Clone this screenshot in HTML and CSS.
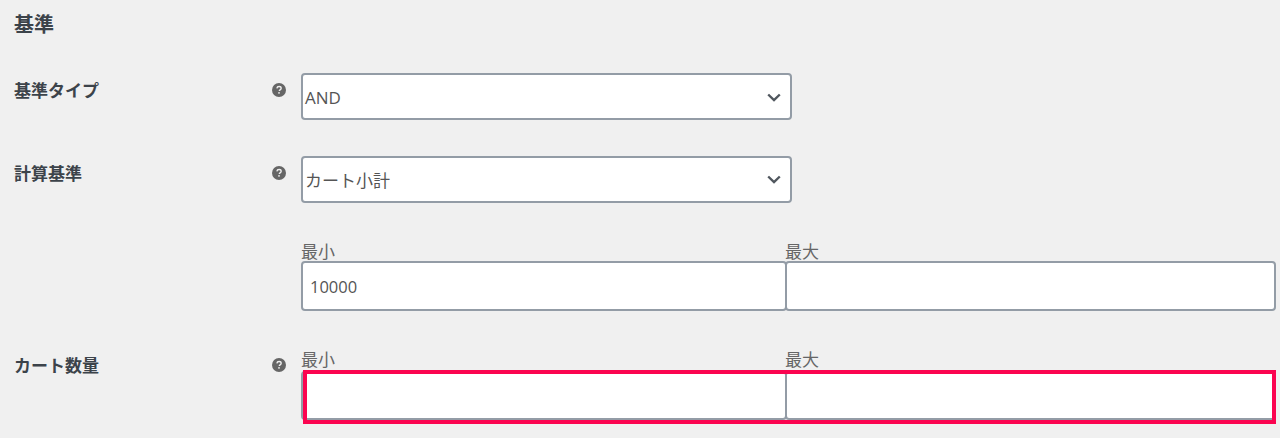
FILE: index.html
```html
<!DOCTYPE html>
<html lang="ja">
<head>
  <meta charset="UTF-8">
  <title>基準</title>
  <link rel="stylesheet" href="styles.css">
</head>
<body>

<h2 class="section-title">基準</h2>

<div class="form-row row-type">
  <div class="row-label">基準タイプ</div>
  <div class="row-help">
    <svg class="help-icon" viewBox="0 0 20 20"><circle cx="10" cy="10" r="10" fill="#666"/><path d="M7 7.6c.2-1.7 1.4-2.6 3.1-2.6 1.8 0 3 1 3 2.5 0 1.2-.7 1.8-1.5 2.3-.8.5-1.1.8-1.1 1.6" fill="none" stroke="#f0f0f0" stroke-width="2"/><rect x="8.9" y="13" width="2.2" height="2.2" fill="#f0f0f0"/></svg>
  </div>
  <div class="row-field">
    <div class="select-box">
      <span>AND</span>
      <svg class="chevron" viewBox="0 0 14 9"><path d="M1.2 1.5 7 7l5.8-5.5" fill="none" stroke="#50575e" stroke-width="2.4"/></svg>
    </div>
  </div>
</div>

<div class="form-row row-basis">
  <div class="row-label">計算基準</div>
  <div class="row-help">
    <svg class="help-icon" viewBox="0 0 20 20"><circle cx="10" cy="10" r="10" fill="#666"/><path d="M7 7.6c.2-1.7 1.4-2.6 3.1-2.6 1.8 0 3 1 3 2.5 0 1.2-.7 1.8-1.5 2.3-.8.5-1.1.8-1.1 1.6" fill="none" stroke="#f0f0f0" stroke-width="2"/><rect x="8.9" y="13" width="2.2" height="2.2" fill="#f0f0f0"/></svg>
  </div>
  <div class="row-field">
    <div class="select-box select-cjk">
      <span>カート小計</span>
      <svg class="chevron" viewBox="0 0 14 9"><path d="M1.2 1.5 7 7l5.8-5.5" fill="none" stroke="#50575e" stroke-width="2.4"/></svg>
    </div>
  </div>
</div>

<div class="form-row row-range">
  <div class="row-label"></div>
  <div class="row-help"></div>
  <div class="row-field range">
    <label class="range-item">
      <span class="range-label">最小</span>
      <div class="text-box">10000</div>
    </label>
    <label class="range-item">
      <span class="range-label">最大</span>
      <div class="text-box"></div>
    </label>
  </div>
</div>

<div class="form-row row-qty">
  <div class="row-label">カート数量</div>
  <div class="row-help">
    <svg class="help-icon" viewBox="0 0 20 20"><circle cx="10" cy="10" r="10" fill="#666"/><path d="M7 7.6c.2-1.7 1.4-2.6 3.1-2.6 1.8 0 3 1 3 2.5 0 1.2-.7 1.8-1.5 2.3-.8.5-1.1.8-1.1 1.6" fill="none" stroke="#f0f0f0" stroke-width="2"/><rect x="8.9" y="13" width="2.2" height="2.2" fill="#f0f0f0"/></svg>
  </div>
  <div class="row-field range">
    <label class="range-item">
      <span class="range-label">最小</span>
      <div class="text-box"></div>
    </label>
    <label class="range-item">
      <span class="range-label">最大</span>
      <div class="text-box"></div>
    </label>
    <div class="highlight"></div>
  </div>
</div>

</body>
</html>
```

FILE: styles.css
```css
html, body {
  height: 438px;
  overflow: hidden;
}
body {
  font-family: "Open Sans", "Noto Sans CJK JP", sans-serif;
  background: #f0f0f0;
  color: #3c434a;
  margin: 0;
  padding: 0;
}
.section-title {
  margin: 0;
  padding: 12px 0 0 14px;
  height: 61px;
  box-sizing: border-box;
  font-size: 20px;
  line-height: 26px;
  font-weight: 700;
  color: #3c434a;
}
.form-row {
  display: flex;
}
.row-label {
  width: 272px;
  padding-left: 14px;
  box-sizing: border-box;
  font-size: 17px;
  line-height: 22px;
  font-weight: 700;
  color: #3c434a;
}
.row-help {
  width: 29px;
}
.help-icon {
  display: block;
  width: 14px;
  height: 14px;
}
.row-field {
  width: 975px;
}
.row-type,
.row-basis {
  height: 83px;
  padding-top: 12px;
  box-sizing: border-box;
}
.row-type .row-label,
.row-basis .row-label {
  margin-top: 7px;
}
.row-type .help-icon,
.row-basis .help-icon {
  margin-top: 10px;
}
.row-range {
  height: 123px;
  padding-top: 15px;
  box-sizing: border-box;
}
.row-qty .row-label {
  margin-top: 5px;
}
.row-qty .help-icon {
  margin-top: 8px;
}
.select-box {
  width: 491px;
  height: 47px;
  box-sizing: border-box;
  background: #fff;
  border: 2px solid #939ca6;
  border-radius: 4px;
  display: flex;
  align-items: center;
  justify-content: space-between;
  padding: 2px 9px 0 2px;
  font-size: 17px;
  color: #555;
}
.select-cjk {
  padding-top: 0;
}
.chevron {
  width: 14px;
  height: 9px;
}
.range {
  display: flex;
  position: relative;
}
.range-item {
  display: block;
  width: 484px;
  flex: none;
}
.range-item:nth-child(2) {
  width: 491px;
}
.range-label {
  display: block;
  font-size: 17px;
  line-height: 19px;
  color: #666;
}
.row-qty .range-label {
  margin-bottom: 2px;
}
.text-box {
  height: 50px;
  box-sizing: border-box;
  background: #fff;
  border: 2px solid #939ca6;
  border-radius: 4px;
  padding: 0 7px;
  font-size: 16.5px;
  line-height: 47px;
  color: #555;
}
.row-qty .text-box {
  height: 49px;
}
.range-item:first-child .text-box {
  margin-right: -2px;
}
.highlight {
  position: absolute;
  left: 2px;
  top: 20px;
  width: 973px;
  height: 54px;
  box-sizing: border-box;
  border: 4px solid #fb0450;
}
```
